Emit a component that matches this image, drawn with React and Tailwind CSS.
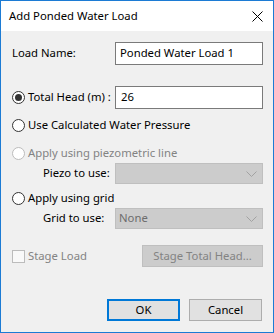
import React from 'react';

const font = { fontFamily: '"Noto Sans", "Open Sans", Arial, sans-serif' };

const Radio = ({ checked, disabled }) => (
    <span
        className={`w-[13px] h-[13px] rounded-full border flex items-center justify-center shrink-0 bg-white ${disabled ? 'border-[#bcbcbc]' : 'border-[#333333]'}`}
    >
        {checked && <span className="w-[7px] h-[7px] rounded-full bg-[#333333]" />}
    </span>
);

const Chevron = () => (
    <svg width="11" height="6" viewBox="0 0 11 6" className="mr-[5px]">
        <path d="M0.5 0.5 L5.5 5.5 L10.5 0.5" fill="none" stroke="#a2a2a2" strokeWidth="1" />
    </svg>
);

const Combo = ({ value }) => (
    <div className="w-[148px] h-[21px] bg-[#cccccc] border border-[#bfbfbf] flex items-center justify-between pl-[3px]">
        <span className="text-[#6d6d6d]">{value}</span>
        <Chevron />
    </div>
);

export default function App() {
    return (
        <div className="w-[274px] h-[333px] bg-[#f0f0f0] border border-[#1c7bd4] text-[11.3px] text-black flex flex-col whitespace-nowrap" style={font}>
            {/* title bar */}
            <div className="h-[30px] bg-white flex items-center justify-between pl-[8px] pr-[10px] shrink-0">
                <span className="text-[11.3px] text-black">Add Ponded Water Load</span>
                <svg width="11" height="11" viewBox="0 0 11 11">
                    <path d="M0.5 0.5 L10.5 10.5 M10.5 0.5 L0.5 10.5" stroke="#000" strokeWidth="1" />
                </svg>
            </div>

            <div className="flex flex-col pl-[11px]">
                <div className="mt-[11px] h-[23px] flex items-center">
                    <span className="w-[103px]">Load Name:</span>
                    <div className="w-[148px] h-[23px] bg-white border border-[#7a7a7a] flex items-center pl-[4px]">Ponded Water Load 1</div>
                </div>

                <div className="mt-[21px] h-[23px] flex items-center">
                    <div className="w-[103px] flex items-center gap-[3px]">
                        <Radio checked />
                        <span>Total Head (m) :</span>
                    </div>
                    <div className="w-[148px] h-[23px] bg-white border border-[#7a7a7a] flex items-center pl-[5px]">26</div>
                </div>

                <div className="mt-[8px] h-[16px] flex items-center gap-[3px]">
                    <Radio />
                    <span>Use Calculated Water Pressure</span>
                </div>

                <div className="mt-[12px] h-[16px] flex items-center gap-[3px]">
                    <Radio disabled />
                    <span className="text-[#838383]">Apply using piezometric line</span>
                </div>

                <div className="mt-[2px] h-[21px] flex items-center pl-[31px]">
                    <span className="w-[72px]">Piezo to use:</span>
                    <Combo value="" />
                </div>

                <div className="mt-[6px] h-[16px] flex items-center gap-[3px]">
                    <Radio />
                    <span>Apply using grid</span>
                </div>

                <div className="mt-[2px] h-[21px] flex items-center pl-[31px]">
                    <span className="w-[72px]">Grid to use:</span>
                    <Combo value="None" />
                </div>

                <div className="mt-[16px] h-[22px] flex items-center">
                    <div className="w-[130px] flex items-center gap-[3px]">
                        <span className="w-[13px] h-[13px] border border-[#bcbcbc] bg-[#f9f9f9]" />
                        <span className="text-[#838383]">Stage Load</span>
                    </div>
                    <div className="w-[121px] h-[22px] bg-[#cccccc] border border-[#bfbfbf] flex items-center justify-center text-[#838383]">Stage Total Head...</div>
                </div>

                <div className="mt-[32px] h-[22px] flex items-center gap-[9px] pl-[95px]">
                    <button className="w-[73px] h-[22px] bg-[#e1e1e1] border-2 border-[#0078d7] flex items-center justify-center">OK</button>
                    <button className="w-[73px] h-[22px] bg-[#e1e1e1] border border-[#adadad] flex items-center justify-center">Cancel</button>
                </div>
            </div>
        </div>
    );
}
